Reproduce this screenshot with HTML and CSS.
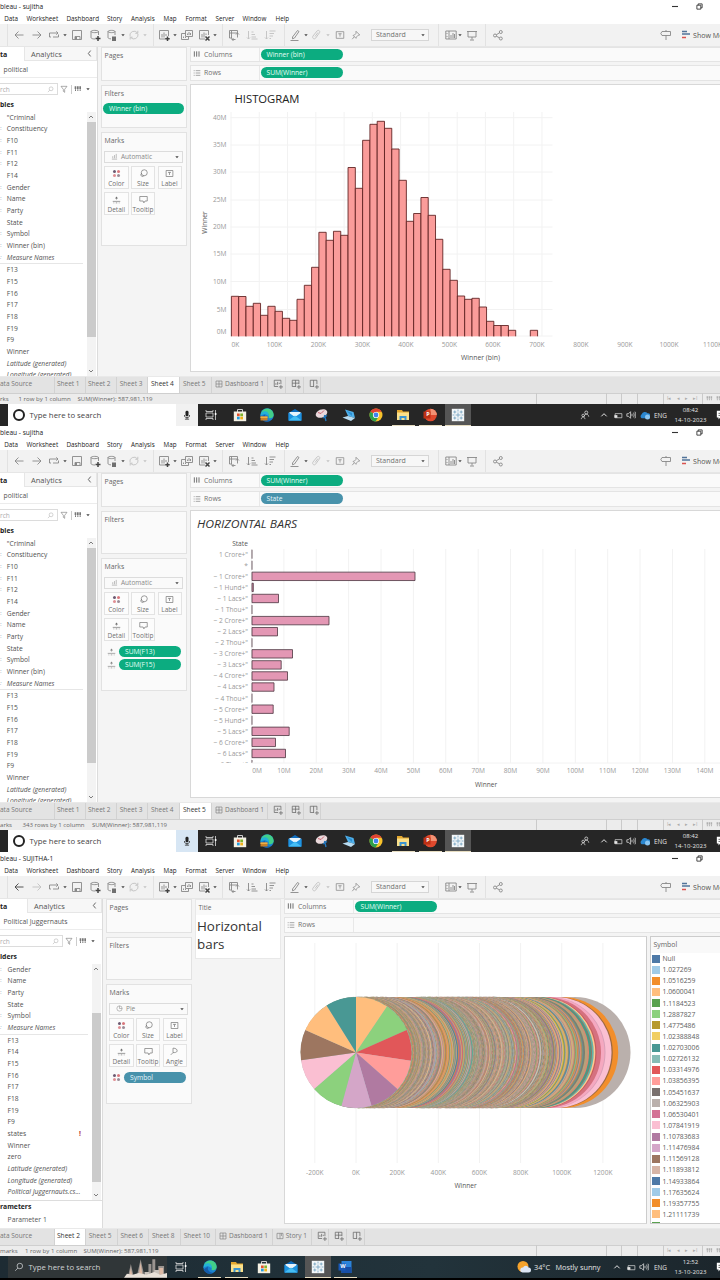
FILE: index.html
```html
<!DOCTYPE html>
<html lang="en">
<head>
<meta charset="utf-8">
<title>Tableau - sujitha</title>
<link rel="stylesheet" href="styles.css">
</head>
<body>
<svg class="sprite" aria-hidden="true">
  <symbol id="back" viewBox="0 0 12 12"><path d="M10.500 6H2M5.500 2.500L2 6l3.500 3.500"/></symbol>
  <symbol id="fwd" viewBox="0 0 12 12"><path d="M1.500 6H10M6.500 2.500L10 6 6.500 9.500"/></symbol>
  <symbol id="redo" viewBox="0 0 12 12"><path d="M3 8H1.500V4H10M8.300 2.300L10 4 8.300 5.700M5 8h5.500V5.500"/></symbol>
  <symbol id="caret" viewBox="0 0 6 6"><path class="fill" d="M1.300 2.200h3.400L3 4.300z"/></symbol>
  <symbol id="save" viewBox="0 0 12 12"><path d="M1.500 1.500h9v9h-9zM4 10.500v-3h5v3"/><path class="fill" d="M4 8h2v2.500H4z"/></symbol>
  <symbol id="dbadd" viewBox="0 0 12 12"><path d="M2 2.500v6c0 1 2 1.500 4 1.500M9.500 6V2.500M2 2.500c0-1.500 7.500-1.500 7.500 0s-7.500 1.500-7.500 0"/><path class="bold" d="M9 7v5M6.500 9.500h5"/></symbol>
  <symbol id="dbpause" viewBox="0 0 12 12"><path d="M2 2.500v6c0 .8 1 1.200 3 1.400M9 6V2.500M2 2.500c0-1.500 7-1.500 7 0s-7 1.500-7 0"/><path class="bold" d="M7 7.500V12M9 7.500V12"/></symbol>
  <symbol id="refresh" viewBox="0 0 12 12"><path d="M2 7.500A4.200 4.200 0 0 1 9.500 4M10 5A4.200 4.200 0 0 1 2.800 8.600M9.800 1.800V4.300H7.300M2.200 10.500V8.200h2.400"/></symbol>
  <symbol id="sheetadd" viewBox="0 0 12 12"><path d="M7 10H1.500V1.500h9V7M4 8.500V5M6 8.500V3.500M8 7V5"/><path class="bold" d="M9.500 7.500v4.500M7.200 9.700h4.500"/></symbol>
  <symbol id="dup" viewBox="0 0 12 12"><path d="M4.500 1.500h7v6h-7zM4.500 4.500h-4v6h7v-3M6.500 6V4.500M8 6V3M9.500 6V4M2.500 9V7.500M4.500 9v-1"/></symbol>
  <symbol id="sheetx" viewBox="0 0 12 12"><path d="M7 10H1.500V1.500h9V6M4 8.500V5M6 8.500V3.500M8 6V4.500"/><path class="bold" d="M7.500 7.500l4 4M11.500 7.500l-4 4"/></symbol>
  <symbol id="swap" viewBox="0 0 12 12"><path d="M1.500 4V1.500h8V4M3.500 1.500v8M1.500 4h8M4 10.500h3.500M9.500 8.500V4M8 5.500L9.500 4 11 5.500M5.500 9L4 10.500 5.500 12M1.500 4v5H4"/></symbol>
  <symbol id="asc" viewBox="0 0 12 12"><path d="M2.500 2v8M1 8.500L2.500 10 4 8.500M5.500 3h2M5.500 5.500H9M5.500 8h4.500M5.500 10h6"/></symbol>
  <symbol id="desc" viewBox="0 0 12 12"><path d="M2.500 2v8M1 8.500L2.500 10 4 8.500M5.500 2h6M5.500 4.500H10M5.500 7H9M5.500 9.500h1.500"/></symbol>
  <symbol id="pen" viewBox="0 0 12 12"><path d="M3.500 8L8.500 1.500l1.500 1L5.500 9l-2 .8zM1.500 11.500h8"/></symbol>
  <symbol id="clip" viewBox="0 0 12 12"><path d="M3 7l4-5c1.500-1.500 3.500 0 2.500 1.700L5.500 9.300C4 10.800 1.800 9 3 7zM5 7.500l3-4"/></symbol>
  <symbol id="tbox" viewBox="0 0 12 12"><path d="M1.500 2h9v8h-9zM4 4.500h4M6 4.500V8"/></symbol>
  <symbol id="pin" viewBox="0 0 12 12"><path d="M6 1.500l4.500 4.500-2 .3L6.500 8.500 6 10 2.500 6.500l1.700-.5L6 4zM4 8l-2.500 3"/></symbol>
  <symbol id="cards" viewBox="0 0 12 12"><path d="M.8 2h10.400v8H.8zM4 2v8M2 4v1M2 7v1M6 9V6M8 9V4M9.500 9V5"/></symbol>
  <symbol id="present" viewBox="0 0 12 12"><path d="M1 2.500h10M2 2.500V8h8V2.500M6 8v2.500M4 11h4"/></symbol>
  <symbol id="share" viewBox="0 0 12 12"><circle cx="3" cy="6.500" r="1.500"/><circle cx="8.800" cy="3" r="1.500"/><circle cx="8.800" cy="9.500" r="1.500"/><path d="M4.300 5.800l3.200-2M4.300 7.200l3.200 1.600"/></symbol>
  <symbol id="sign" viewBox="0 0 12 12"><path d="M2 2.500h8.500v4H2L.8 4.500zM6 6.500V11M6 1v1.500"/></symbol>
  <symbol id="mag" viewBox="0 0 12 12"><circle cx="7" cy="4.800" r="3.300"/><path d="M4.700 7.200L1.500 10.500"/></symbol>
  <symbol id="funnel" viewBox="0 0 12 12"><path d="M1.500 2h9L7 6.500V11L5 9.500v-3z"/></symbol>
  <symbol id="cols" viewBox="0 0 12 12"><path class="wide" d="M2 2v8M5.500 2v8M9 2v8"/></symbol>
  <symbol id="rows" viewBox="0 0 12 12"><path d="M1 2.500h1.500M4 2.500h7M1 6h1.500M4 6h7M1 9.500h1.500M4 9.500h7"/></symbol>
  <symbol id="gridv" viewBox="0 0 12 12"><path class="fill" d="M1 2h2.500v4H1zM4.500 2H7v4H4.500zM8 2h2.500v4H8zM1.500 6.500h1.500V9H1.500zM5 6.500h1.500V9H5zM8.500 6.500H10V9H8.500z"/></symbol>
  <symbol id="dots" viewBox="0 0 12 12"><circle cx="3.300" cy="3.300" r="2" fill="#6d5a72" stroke="none"/><circle cx="8.700" cy="3.300" r="2" fill="#d9777c" stroke="none"/><circle cx="3.300" cy="8.700" r="2" fill="#e08f94" stroke="none"/><circle cx="8.700" cy="8.700" r="2" fill="#9b8c98" stroke="none"/></symbol>
  <symbol id="size" viewBox="0 0 12 12"><circle cx="7" cy="5" r="4"/><path d="M4 5.500a2.300 2.300 0 1 0 2.800 3.200"/></symbol>
  <symbol id="detail" viewBox="0 0 12 12"><path class="fill" d="M6 2l2 2.500H4z"/><path d="M1 8.500h10M2 10.500h1M5 10.500h2M9 10.500h1M6 3v3"/></symbol>
  <symbol id="tip" viewBox="0 0 12 12"><path d="M1 2h10v6H8l-1.500 2.500L5.500 8H1z"/></symbol>
  <symbol id="angle" viewBox="0 0 12 12"><path d="M4 1.500v6l-3 3M4 1.500c4 0 6 2 5.500 4S6 7.500 4 7.500"/></symbol>
  <symbol id="bars" viewBox="0 0 12 12"><path d="M1.500 10.500h9M3 9V5.500M6 9V3.500M9 9V1.500"/></symbol>
  <symbol id="pie" viewBox="0 0 12 12"><circle cx="6" cy="6" r="4.500"/><path d="M6 1.500V6h4.500"/></symbol>
  <symbol id="board" viewBox="0 0 12 12"><path d="M1.500 1.500h9v9h-9zM6 1.500v9M1.500 6h9"/></symbol>
  <symbol id="story" viewBox="0 0 12 12"><path d="M1.500 2H6v8H1.500zM6 2h4.500v8H6M8.200 2v4"/></symbol>
  <symbol id="newws" viewBox="0 0 12 12"><path d="M6 9H1.500V1.500h8V6M3.500 7V5M5.500 7V3.500M7.500 6V4.500M9.500 7v5M7 9.500h5"/></symbol>
  <symbol id="newdb" viewBox="0 0 12 12"><path d="M6 9H1.500V1.500h8V6M5.500 1.500V9M1.500 5h8M9.500 7v5M7 9.500h5"/></symbol>
  <symbol id="newst" viewBox="0 0 12 12"><path d="M6 9H1.500V1.500h8V6M5.500 1.500V9M9.500 7v5M7 9.500h5"/></symbol>
  <symbol id="up" viewBox="0 0 12 12"><path class="wide" d="M2 8l4-4 4 4"/></symbol>
  <symbol id="down" viewBox="0 0 12 12"><path class="wide" d="M2 4l4 4 4-4"/></symbol>
  <symbol id="left" viewBox="0 0 12 12"><path class="wide" d="M8 1L4 6l4 5"/></symbol>

  <symbol id="taskview" viewBox="0 0 14 14"><path d="M2 2v1.500h7V2M2 12v-1.500h7V12M2 5h7v4H2zM11.500 2v10" stroke="#ddd" fill="none" stroke-width=".8"/><path d="M10.800 5h1.600v2h-1.600z" fill="#fff"/></symbol>
  <symbol id="store" viewBox="0 0 14 14"><path d="M4.500 4V1.500h5V4" stroke="#ccc" fill="none"/><path d="M.8 3.500h12.400v9.700H.8z" fill="#f5f1e4"/><path d="M4 5.500h2.700v2.700H4z" fill="#e2512b"/><path d="M7.300 5.500H10v2.700H7.300z" fill="#7fb52c"/><path d="M4 8.700h2.700v2.700H4z" fill="#249ede"/><path d="M7.300 8.700H10v2.700H7.300z" fill="#f1b21b"/></symbol>
  <symbol id="edge" viewBox="0 0 14 14"><circle cx="7" cy="7" r="6.700" fill="#1a80cf"/><path d="M1 5a6.500 6.500 0 0 1 12.700 2c0 2-1.500 3.200-3.500 3.200-1.500 0-2-.8-1.400-1.700C9.500 6 6.500 3.500 1 5z" fill="#42cf89"/><path d="M1 5C5 1.500 9.500 4 8.800 8.500 5 4.800 2.500 6.500.5 8z" fill="#23b1d8"/><path d="M5 6.500c-1 3 1 6 5 6.300-3.500 2-8 .5-9.300-3.200z" fill="#145aa8"/></symbol>
  <symbol id="case" viewBox="0 0 8 6"><path d="M.5 1.500h7v4h-7z" fill="#c98028"/><path d="M.5 1.500h7V3h-7z" fill="#efaf45"/></symbol>
  <symbol id="mail" viewBox="0 0 14 14"><path d="M.5 5L7 1l6.500 4v7.500H.5z" fill="#0f6cbd"/><path d="M1.500 4h11v4h-11z" fill="#e8f4fc"/><path d="M.5 4.500L7 9l6.500-4.500v8H.5z" fill="#1f93e0"/><path d="M.5 12.500L7 7.500l6.500 5z" fill="#45bdf3"/></symbol>
  <symbol id="snip" viewBox="0 0 14 14"><ellipse cx="6.500" cy="5.500" rx="6" ry="4" fill="#ead9dc" transform="rotate(-22 6.500 5.500)"/><path d="M3 4.500l3 1 3-3" stroke="#c35361" stroke-width=".9" fill="none"/><path d="M9.500 7l1.500 6M12 7.500L8 10" stroke="#2176bd" stroke-width="1.400"/></symbol>
  <symbol id="pc" viewBox="0 0 14 14"><path d="M3 1.500L11.500 4l1.500 6-7-2z" fill="#4fb0ea"/><path d="M.5 9.500L6 8l7 2-4 3z" fill="#b8dcf2"/><path d="M4.500 3l5.500 2v3z" fill="#2b8ed2"/></symbol>
  <symbol id="chrome" viewBox="0 0 14 14"><circle cx="7" cy="7" r="6.500" fill="#f8c22b"/><path d="M7 7L1.400 3.700A6.500 6.500 0 0 1 12.600 3.700H7z" fill="#e04234"/><path d="M7 7l-5.600-3.300A6.500 6.500 0 0 0 6.500 13.500L9.500 9z" fill="#2da14c"/><circle cx="7" cy="7" r="3.100" fill="#fff"/><circle cx="7" cy="7" r="2.400" fill="#3f83ee"/></symbol>
  <symbol id="folder" viewBox="0 0 14 14"><path d="M1 2h5l1 1.500h6V12H1z" fill="#e3a72f"/><path d="M1 4.500h12V12H1z" fill="#fbe08a"/><path d="M3.500 8h7v4h-2v-2h-3v2h-2z" fill="#3c94d0"/></symbol>
  <symbol id="ppt" viewBox="0 0 14 14"><circle cx="7.500" cy="7" r="6.300" fill="#e0492d"/><path d="M7.500.7a6.300 6.300 0 0 1 6.300 6.300H7.500z" fill="#f39274"/><path d="M.5 3.500h7v7h-7z" fill="#bd3015"/></symbol>
  <symbol id="word" viewBox="0 0 14 14"><path d="M3.500 1h10v12h-10z" fill="#2b83da"/><path d="M3.500 7h10v6h-10z" fill="#174ea5"/><path d="M.5 3.500h7v7h-7z" fill="#1858b8"/></symbol>
  <symbol id="tableau" viewBox="0 0 14 14"><path d="M.8.8h12.400v12.400H.8z" fill="#f4f7f9"/><path d="M7 4.500v5M4.500 7h5M7 1.500v2M7 10.500v2M1.500 7h2M10.500 7h2M3.800 2.500v3M2.300 4h3M10.200 2.500v3M8.700 4h3M3.800 8.500v3M2.300 10h3M10.200 8.500v3M8.700 10h3" stroke="#6f9fbe" fill="none" stroke-width=".8"/></symbol>
  <symbol id="mic" viewBox="0 0 12 12"><rect x="4.200" y="1" width="3.600" height="6.500" rx="1.600" fill="#222" stroke="none"/><path d="M3 6v1.500c0 2 6 2 6 0V6M6 9v2M3.500 11h5" stroke="#222"/></symbol>
  <symbol id="people" viewBox="0 0 12 12"><circle cx="7.500" cy="3" r="1.800"/><path d="M5 8c.5-4 5-4 5.500 0M1.500 11c.5-3.500 4-3.500 4.500 0"/><circle cx="3.800" cy="6.500" r="1.500"/></symbol>
  <symbol id="battery" viewBox="0 0 12 12"><path d="M1.500 3.500h9v5.500h-9z"/><path class="fill" d="M.5 5.500h4V9h-4z"/></symbol>
  <symbol id="vol" viewBox="0 0 12 12"><path d="M1 4.500h2L5.500 2v8L3 7.500H1zM7.200 4.500v3M9 3.200c1 2 1 3.600 0 5.600M10.700 2c1.500 3 1.500 5 0 8"/></symbol>
  <symbol id="cloud" viewBox="0 0 12 12"><path d="M2 10a3 3 0 0 1 0-5 4 4 0 0 1 7-1 3 3 0 0 1 1 6z" fill="#2b87d0" stroke="none"/><circle cx="9" cy="8.500" r="3" fill="#8ac5f0" stroke="none"/></symbol>
  <symbol id="note" viewBox="0 0 12 12"><path d="M1 1h11v8H5l-2 2.500V9H1z" fill="#fff" stroke="none"/><path d="M3 4h8M3 6.500h8" stroke="#333"/></symbol>
  <symbol id="city" viewBox="0 0 44 20"><path d="M4 19l3-13 3 13zM13 19l4-18 4 18zM25 19V6h3v13zM29 19V1h3v18zM35 19V8h6v11z" fill="#9a9490"/><path d="M15 18l2-14 2 14zM5.500 18l1.500-8 1.500 8zM36 10h4v7h-4z" fill="#dcb9a5"/><path d="M21 14h5v5h-5zM31 12h5v7h-5z" fill="#c9c2bc"/><path d="M0 20l3-4 6 1 6-2 8 2 8-3 6 3 7-2v5z" fill="#e9e1d9"/></symbol>
  <symbol id="weather" viewBox="0 0 14 14"><circle cx="6" cy="6.500" r="5.500" fill="#f6a32c"/><path d="M5.500 12.500a2.500 2.500 0 0 1 .5-5 3 3 0 0 1 5.500 0 2.500 2.500 0 0 1 0 5z" fill="#dce6f5"/></symbol>
</svg>
<div id="desktop" class="desktop"></div>
<script src="app.js"></script>
</body>
</html>
```
FILE: styles.css
```css
* { box-sizing: border-box; }
body { margin: 0; background: #000; font-family: "Open Sans", "Noto Sans", sans-serif; color: #555; overflow: hidden; }
.sprite { position: absolute; width: 0; height: 0; }
.desktop { width: 720px; height: 1280px; overflow: hidden; }
.win { height: 426px; background: #f4f4f4; display: flex; flex-direction: column; overflow: hidden; white-space: nowrap; }
.win > * { flex: none; }
.ico { width: 12px; height: 12px; fill: none; stroke: currentColor; stroke-width: .900; display: block; flex: none; }
.ico .fill, .fill { fill: currentColor; stroke: none; }
.bold { stroke-width: 1.5; stroke: #444; }
.wide { stroke-width: 1.5; }
.s6 { width: 6px; height: 6px; }
.s7 { width: 7px; height: 7px; }
.s8 { width: 8px; height: 8px; }
.s9 { width: 9px; height: 9px; }
.s10 { width: 10px; height: 10px; }
.s14 { width: 14px; height: 14px; }
.track { display: flex; align-items: center; height: 100%; }
.slot { flex: none; min-width: 0; display: flex; align-items: center; height: 100%; }

.titlebar { height: 13px; background: #fff; font-size: 6.600px; color: #222; }
.menubar { height: 11px; background: #fff; font-size: 6.300px; color: #222; padding-top: .500px; }
.toolbar { height: 22.500px; background: #f2f2f2; border-bottom: 1px solid #e6e6e6; color: #888; }
.toolbar .ico { margin-left: -.500px; }
.off { opacity: .45; }
.strong { color: #444; }
.sep { width: 1px; height: 100%; background: #e2e2e2; }
.select { width: 58px; height: 12px; border: 1px solid #d6d6d6; background: #f7f7f7; display: flex; align-items: center; justify-content: space-between; padding: 0 2px 0 4px; font-size: 7px; color: #707070; }
.showme { font-size: 7.100px; color: #555; }
.smico { width: 8px; height: 9px; }

.body { height: 329px; display: flex; }
.pane { width: 97.500px; background: #fff; border-right: 1px solid #dcdcdc; display: flex; flex-direction: column; height: 329px; overflow: hidden; }
.third .pane { width: 102.500px; }
.ptabs { height: 14.500px; display: flex; flex: none; font-size: 7.500px; padding-top: .500px; }
.ptab { width: 24px; font-weight: 700; font-size: 7px; color: #222; display: flex; align-items: center; }
.third .ptab { width: 27px; }
.ptab2 { flex: 1; background: #f7f7f7; border: 1px solid #e6e6e6; border-top: 0; display: flex; align-items: center; justify-content: space-between; padding: 0 3px 0 6px; }
.ds { height: 16.500px; flex: none; border-bottom: 1px solid #ececec; font-size: 6.800px; padding: 1px 0 0 3.500px; display: flex; align-items: center; }
.search { height: 23px; flex: none; display: flex; align-items: center; gap: 2.500px; color: #777; }
.sbox { width: 57.500px; height: 12px; border: 1px solid #dcdcdc; border-left: 0; display: flex; align-items: center; justify-content: space-between; padding-right: 3px; font-size: 6.600px; color: #adadad; }
.third .sbox { width: 62.500px; }
.vr { width: 1px; height: 9px; background: #ccc; }
.head { height: 8px; line-height: 8px; flex: none; font-weight: 700; font-size: 6.800px; color: #222; }
.listbox { flex: 1; min-height: 0; display: flex; padding-top: 3px; }
.list { flex: 1; overflow: hidden; }
.field { height: 11.680px; line-height: 11.680px; font-size: 6.700px; display: flex; color: #505050; }
.field .mk { width: 6.800px; flex: none; color: #7a9bb5; font-size: 6px; }
.third .field .mk { width: 7.600px; }
.field .warn { margin-left: auto; padding-right: 11px; color: #b03030; font-weight: 700; }
.it { font-style: italic; }
.rule { height: 1px; background: #e6e6e6; margin-right: 4px; }
.scroll { width: 8.500px; margin-right: 1px; background: #f3f3f3; display: flex; flex-direction: column; align-items: center; color: #555; padding: 2px 0; }
.thumb { width: 8.500px; background: #cbcbcb; margin-top: 2px; height: 215px; }
.third .thumb { margin-top: 41px; height: 169px; }
.scroll .ico:last-child { margin-top: auto; }
.params { flex: none; height: 28px; border-top: 1px solid #ddd; padding-top: 1.500px; }
.params .head { height: 10px; line-height: 10px; }
.params .p { padding-left: 7.600px; font-size: 6.800px; line-height: 15px; }

.cards { width: 86px; margin-left: 3px; display: flex; flex-direction: column; gap: 4px; }
.card { background: #fafafa; border: 1px solid #e2e2e2; padding: 2px 2.500px; font-size: 6.900px; color: #666; flex: none; }
.card .t { line-height: 11px; padding-left: .500px; display: block; }
.c-pages { height: 34px; }
.c-filters { height: 43px; }
.c-marks { height: 114px; }
.second .c-marks { height: 133px; }
.third .c-marks { height: 120.500px; }
.pill { height: 11px; border-radius: 6px; background: #0cac80; color: #e4fff6; font-size: 6.700px; line-height: 11px; padding-left: 6px; }
.pill.blue { background: #4892ab; color: #e5f6fb; }
.c-filters .pill { margin: 4px -1px 0 -1px; }
.mark-type { height: 11.500px; border: 1px solid #dcdcdc; margin: 5.500px .500px 3px 0; display: flex; align-items: center; gap: 3px; padding-left: 6px; font-size: 6.500px; color: #888; }
.mark-type .ico:last-child { margin: 0 2px 0 auto; color: #444; }
.btns { display: grid; grid-template-columns: 24.500px 24px 24px; column-gap: 2.500px; row-gap: 3px; }
.btn { height: 23px; border: 1px solid #e3e3e3; background: #fcfcfc; display: flex; flex-direction: column; align-items: center; font-size: 6.500px; line-height: 9px; padding-top: 2.500px; gap: 1px; color: #707070; }
.enc { display: flex; align-items: center; gap: 3px; padding: 0 2px 0 3px; margin-top: 1.800px; height: 11px; color: #888; }
.encs { padding-top: 4px; }
.enc .pill { flex: 1; }

.title-card { width: 86px; height: 60px; margin-left: 3px; background: #fff; border: 1px solid #e8e8e8; }
.title-card .t { display: block; height: 15px; line-height: 16px; background: #f9f9f9; font-size: 6.500px; padding-left: 3px; color: #666; }
.title-card p { margin: 2px 0 0 1.500px; font-size: 13.400px; line-height: 18.300px; color: #333; }

.main { flex: 1; min-width: 0; margin-left: 3px; display: flex; flex-direction: column; }
.shelf { height: 15.500px; background: #fafafa; border: 1px solid #e4e4e4; border-right: 0; display: flex; align-items: center; margin-bottom: 3px; font-size: 6.900px; color: #707070; flex: none; }
.shelf .n { width: 69px; height: 100%; border-right: 1px solid #e8e8e8; display: flex; align-items: center; gap: 3.500px; padding-left: 2px; }
.shelf .pill { width: 82px; margin-left: 1px; }
.view { flex: 1; display: flex; gap: 3px; margin-bottom: 4px; min-height: 0; }
.canvas { flex: 1; min-width: 0; background: #fff; border: 1px solid #d8d8d8; border-right: 0; overflow: hidden; }
.third .canvas { flex: 0 0 363px; border-right: 1px solid #ccc; }
.chart { display: block; width: 100%; height: 100%; font-size: 6.600px; fill: #999; }
.chart .grid { stroke: #f2f2f2; stroke-width: 1; fill: none; }
.chart .axt { fill: #555; }
.chart .ttl { font-size: 10.300px; fill: #222; font-weight: 500; }
.chart .ital { font-style: italic; fill: #333; }
.hbar { fill: #fa9c9a; stroke: #5a1c1c; stroke-width: .850; }
.rbar { fill: #e397b4; stroke: #4b3540; stroke-width: .800; }
.legend { flex: 1; background: #fff; border: 1px solid #ccc; border-right: 0; overflow: hidden; }
.legend .t { display: block; height: 16.500px; line-height: 16px; background: #f9f9f9; padding-left: 3px; font-size: 6.900px; color: #666; }
.leg { height: 11.130px; display: flex; align-items: center; gap: 3px; padding-left: 1px; font-size: 6.800px; color: #606060; }
.sw { width: 8px; height: 8px; }

.tabs { height: 17px; background: #e3e3e3; font-size: 6.500px; color: #777; border-top: 1px solid #e9e9e9; }
.tab { width: 100%; height: 100%; border-left: 1px solid #d2d2d2; padding: 0 0 2px 2.500px; display: flex; align-items: center; gap: 2px; }
.tab.plain { border-left: 0; padding-left: 0; }
.tab.i { padding-left: 5px; color: #666; }
.tab.on { background: #fff; color: #333; font-weight: 500; font-size: 6.600px; }
.status { height: 11.500px; background: #ececec; border-top: 1px solid #cfcfcf; font-size: 6.100px; color: #666; }
.status .slot { padding-bottom: 1px; }
.status .sep { background: #cacaca; height: 11.500px; }
.status .nav { color: #aaa; font-size: 5px; }

.task { height: 22px; background: #262626; color: #e4e4e4; }
.third .task { background: linear-gradient(90deg, #1d2b33, #22333b 60%, #1c262c); }
.find { height: 22px; background: #fff; color: #444; font-size: 7.800px; display: flex; align-items: center; width: 190.500px; padding: 0 0 0 5px; }
.find .lbl { margin: -1px 0 0 5px; flex: 1; }
.ring { width: 12px; height: 12px; border: 2px solid #222; border-radius: 50%; }
.mic { width: 22px; height: 22px; background: #f1f1f1; display: flex; align-items: center; justify-content: center; }
.second .mic { background: #d7e6f4; }
.third .find { background: #303638; color: #d0d3d5; width: 159.500px; padding-left: 6px; }
.city { width: 43px; height: 20px; align-self: flex-end; }
.app { width: 26px; height: 22px; display: flex; align-items: center; justify-content: center; border-bottom: 1px solid transparent; position: relative; }
.app.run { border-bottom-color: #e6dcc0; width: 23px; }
.app.act { background: #555; border-bottom-color: #e6dcc0; }
.badge { position: absolute; left: 6px; bottom: 4px; width: 8px; height: 6px; }
.letter { position: absolute; left: 6px; top: 7px; width: 7px; text-align: center; font-size: 5.500px; line-height: 7px; font-weight: 700; color: #fff; }
.clock { font-size: 6.100px; line-height: 10px; text-align: center; width: 34px; }
.lang { font-size: 6.400px; }
.wx { font-size: 7.300px; }
```
FILE: app.js
```js
const ico = (id, cls = '') => `<svg class="ico ${cls}"><use href="#${id}"/></svg>`;

// A row of items, each one given by its start; a slot is as wide as the distance to the next start.
function track(items) {
  let out = items[0][0] ? `<div class="slot" style="width:${items[0][0]}px"></div>` : '';
  items.forEach(([x, html], i) => {
    const next = i + 1 < items.length ? items[i + 1][0] : 720;
    out += `<div class="slot" style="width:${(next - x).toFixed(2)}px">${html}</div>`;
  });
  return `<div class="track">${out}</div>`;
}

const sep = '<span class="sep"></span>';
const caret = ico('caret', 's6 strong');
const caretOff = ico('caret', 's6 off');

function toolbar(w) {
  const sort = w.sortOff ? 'off' : '';
  return track([
    [7, sep], [13.5, ico('back', w.back ? 'strong' : '')], [31.5, ico('fwd', w.back ? 'off' : '')], [48, ico('redo')], [62.5, caret],
    [71.5, ico('save')], [89.5, ico('dbadd')], [106, ico('dbpause')], [120, caret], [128.5, ico('refresh', 'off')], [142.5, caretOff],
    [152.5, sep], [158, ico('sheetadd')], [172.5, caret], [181, ico('dup')], [198, ico('sheetx')], [212, caret],
    [222, sep], [228.5, ico('swap')], [246.5, ico('asc', sort)], [264.5, ico('desc', sort)],
    [283.5, sep], [289.5, ico('pen')], [303, caret], [310.5, ico('clip', 'off')], [325, caretOff], [335.5, ico('tbox', 's10')], [351.5, ico('pin', 's10')],
    [371, `<div class="select"><span>Standard</span>${caret}</div>`], [437.5, sep], [445, ico('cards')], [457, caret], [466.5, ico('present')],
    [485, sep], [492, ico('share')], [660, ico('sign')],
    [682, '<svg class="smico" viewBox="0 0 8 9"><path d="M0 1.500h5M0 4h8" stroke="#52749a" stroke-width="1.600"/><path d="M0 7.500h4" stroke="#d9534f" stroke-width="1.500"/></svg>'],
    [693, '<span class="showme">Show Me</span>']
  ]);
}

const menu = track([[4.2, 'Data'], [26.5, 'Worksheet'], [66.5, 'Dashboard'], [107, 'Story'], [131, 'Analysis'], [163.5, 'Map'],
  [185.5, 'Format'], [215.5, 'Server'], [242.5, 'Window'], [275.5, 'Help']]);

const field = f => {
  if (f === '-') return '<div class="rule"></div>';
  const it = f[0] === '/', mk = f[it ? 1 : 0] === ':';
  const name = f.replace(/^\/?:?/, '');
  return `<div class="field ${it ? 'it' : ''}"><span class="mk">${mk ? ':' : ''}</span>${name}${name === 'states' ? '<span class="warn">!</span>' : ''}</div>`;
};

function pane(w) {
  return `<div class="pane">
    <div class="ptabs"><span class="ptab">ta</span><span class="ptab2">Analytics ${ico('left', 's7')}</span></div>
    <div class="ds">${w.source}</div>
    <div class="search"><span class="sbox">rch ${ico('mag', 's7')}</span>${ico('funnel', 's8')}<span class="vr"></span>${ico('gridv', 's8')}${caret}</div>
    <div class="head">${w.head}</div>
    <div class="listbox"><div class="list">${w.fields.map(field).join('')}</div>
      <div class="scroll">${ico('up', 's6')}<span class="thumb"></span>${ico('down', 's6')}</div></div>
    ${w.params ? '<div class="params"><div class="head">rameters</div><div class="p">Parameter 1</div></div>' : ''}
  </div>`;
}

const pill = ([text, blue]) => `<div class="pill ${blue ? 'blue' : ''}">${text}</div>`;
const btn = (id, t) => `<span class="btn">${ico(id, 's9')}${t}</span>`;

function cards(w) {
  return `<div class="cards">
    <div class="card c-pages"><span class="t">Pages</span></div>
    <div class="card c-filters"><span class="t">Filters</span>${w.filter ? pill([w.filter]) : ''}</div>
    <div class="card c-marks"><span class="t">Marks</span>
      <div class="mark-type">${w.mark === 'Pie' ? ico('pie', 's7') : ico('bars', 's7')}${w.mark}${ico('caret', 's6')}</div>
      <div class="btns">${btn('dots', 'Color')}${btn('size', 'Size')}${btn('tbox', 'Label')}${btn('detail', 'Detail')}${btn('tip', 'Tooltip')}${w.mark === 'Pie' ? btn('angle', 'Angle') : ''}</div>
      <div class="encs">${w.encs.map(([i, ...p]) => `<div class="enc">${ico(i, 's9')}${pill(p)}</div>`).join('')}</div>
    </div></div>`;
}

const text = (x, y, s, extra = '') => `<text x="${x}" y="${y + 2.4}" text-anchor="middle" ${extra}>${s}</text>`;
const fit = (s, k) => `textLength="${(s.length * k).toFixed(1)}" lengthAdjust="spacingAndGlyphs"`;

function histogram() {
  const tops = [296.3, 296.5, 306.3, 303.3, 315.3, 306.3, 311.3, 318.3, 320.3, 299.3, 285.3, 267.3, 232.3, 240.3, 231.3, 235.3, 167.5, 188.3,
    140.3, 124.3, 121.3, 128.3, 149, 180.3, 221.3, 213.5, 197.5, 215.3, 239.3, 269.3, 280.3, 296, 299.3, 298.3, 307, 321.3, 325.5, 325.5, 330.3, 0, 0, 330.3];
  let s = '';
  [117.7, 145, 172, 200, 227, 254, 281.5, 309.5, 336].forEach((y, i) => {
    s += `<path class="grid" d="M230 ${y}H552"/>`;
    s += `<text x="226" y="${(i === 8 ? 331.5 : y) + 2.4}" text-anchor="end">${40 - i * 5}M</text>`;
  });
  for (let i = 0; i < 12; i++) s += `<path class="grid" d="M${230.5 + i * 28.27} 112V336"/>`;
  tops.forEach((t, i) => { if (t) s += `<path class="hbar" d="M${230.9 + i * 7.29} 336.300V${t}h7.290V336.300"/>`; });
  [235, 274, 318, 362, 405.5, 449, 492.5, 536.5, 580.5, 624.5, 668.5, 712].forEach((x, i) => { s += text(x, 345, i ? `${i}00K` : '0K'); });
  s += text(480, 358, 'Winner (bin)', 'class="axt" ' + fit('Winner (bin)', 3.25));
  s += `<text class="axt" transform="translate(206.500 222.500) rotate(-90)" text-anchor="middle">Winner</text>`;
  s += `<text class="ttl" x="234" y="102.600" textLength="65" lengthAdjust="spacingAndGlyphs">HISTOGRAM</text>`;
  return `<svg class="chart" viewBox="190.500 85 529.500 286" preserveAspectRatio="none">${s}</svg>`;
}

function horizontalBars() {
  const rows = [['1 Crore+"', 0], ['*', 0], ['~ 1 Crore+"', 414.5], ['~ 1 Hund+"', 252.8], ['~ 1 Lacs+"', 278], ['~ 1 Thou+"', 0], ['~ 2 Crore+"', 328.5],
    ['~ 2 Lacs+"', 277], ['~ 2 Thou+"', 0], ['~ 3 Crore+"', 292], ['~ 3 Lacs+"', 280.7], ['~ 4 Crore+"', 287], ['~ 4 Lacs+"', 273.5], ['~ 4 Thou+"', 0],
    ['~ 5 Crore+"', 272.7], ['~ 5 Hund+"', 0], ['~ 5 Lacs+"', 288.7], ['~ 6 Crore+"', 275], ['~ 6 Lacs+"', 285], ['~ 6 Thou+"', 0]];
  let s = '';
  for (let i = 0; i < 15; i++) {
    const x = 251 + i * 32.38;
    s += `<path class="grid" d="M${x} 549V763"/>` + text(i ? x : 256.5, 771, `${i * 10}M`);
  }
  s += '<clipPath id="rowsclip"><path d="M190 540h530v223H190z"/></clipPath><g clip-path="url(#rowsclip)">';
  rows.forEach(([t, end], i) => {
    const y = 554.2 + i * 11.07;
    s += `<text x="247.500" y="${y + 2.4}" text-anchor="end" font-size="6.600">${t}</text>`;
    s += end ? `<path class="rbar" d="M251.500 ${y - 4.2}H${end}v8.400H251.500z"/>` : `<path class="rbar" d="M251.500 ${y - 4.5}v9"/>`;
  });
  s += '</g><path class="grid" d="M251 763H720"/>';
  s += text(239.5, 543.6, 'State', 'class="axt"') + text(485.5, 784.5, 'Winner', 'class="axt"');
  s += `<text class="ttl ital" x="196.500" y="528.300" textLength="100" lengthAdjust="spacingAndGlyphs">HORIZONTAL BARS</text>`;
  return `<svg class="chart" viewBox="190.500 511 529.500 286" preserveAspectRatio="none">${s}</svg>`;
}

const palette = ['#4e79a7', '#a0cbe8', '#f28e2b', '#ffbe7d', '#59a14f', '#8cd17d', '#b6992d', '#f1ce63', '#499894', '#86bcb6',
  '#e15759', '#ff9d9a', '#79706e', '#bab0ac', '#d37295', '#fabfd2', '#b07aa1', '#d4a6c8', '#9d7660', '#d7b5a6'];

function pies() {
  const cy = 1052.5, r = 55.5;
  let s = '', seed = 11;
  const rnd = () => (seed = (seed * 16807) % 2147483647) / 2147483647;
  for (let i = 0; i < 8; i++) {
    const x = 355.5 + (i - 1) * 41.15;
    s += `<path class="grid" d="M${x} 943V1163"/>` + text(x, 1172.5, i === 1 ? '0K' : `${(i - 1) * 200}K`);
  }
  const circle = (edge, c) => `<circle cx="${(edge - r).toFixed(2)}" cy="${cy}" r="${r}" fill="${c}"/>`;
  [[630, '#bab0ac'], [617.7, '#f28e2b'], [612.3, '#9d6a40'], [611, '#fabfd2'], [605, '#d9a0b8'], [604, '#f5a8c0'], [600.5, '#d5717f'], [596, '#c45c5c'],
    [594.8, '#ffc890'], [593.2, '#64b5a9'], [591.5, '#8c7a68'], [590.5, '#499884'], [588.5, '#d98a70'], [587, '#b9a07a'], [584.5, '#79806e']].forEach(a => { s += circle(...a); });

  // Densely stacked marks average towards a neutral tone; the accents are the wider bands that stay visible.
  const mix = (hex, k) => {
    const base = [163, 148, 122];
    return 'rgb(' + base.map((b, i) => Math.round(b + (parseInt(hex.substr(1 + i * 2, 2), 16) - b) * k)).join(',') + ')';
  };
  const accents = [[581, '#e08a5a'], [577.5, '#d98a3c'], [573.5, '#caa98c'], [569.5, '#5f86a8'], [567, '#d8c04c'], [563.5, '#d9bd50'], [558, '#e0a878'], [540.5, '#c9c3c0'],
    [531, '#e0ad84'], [517, '#c76f80'], [502, '#dcb19a'], [490, '#ddb38a'], [472.5, '#5aab94'], [462.5, '#cf6878'], [460, '#a8709a'], [457.5, '#54809f'], [452, '#dd9c40'],
    [448.5, '#d9a24c'], [445, '#d39a50'], [436, '#a2a4bc'], [431, '#e2b68c']];
  for (let edge = 583; edge > 411; edge -= 0.62) {
    while (accents.length && accents[0][0] >= edge) {
      const [x, c] = accents.shift();
      s += circle(x, c);
      edge = Math.min(edge, x - 1.1);
    }
    const strong = edge > 552 || (edge > 440 && edge < 472);
    s += circle(edge, mix(palette[Math.floor(rnd() * 20)], strong ? 0.6 : rnd() < 0.13 ? 0.62 : 0.33));
    if (!strong) s += `<circle cx="${(edge - r).toFixed(2)}" cy="${cy}" r="${r - 0.3}" fill="none" stroke="${mix(palette[Math.floor(rnd() * 20)], .55)}" stroke-width=".500" stroke-dasharray="${(1 + rnd() * 3).toFixed(1)} ${(2 + rnd() * 4).toFixed(1)}"/>`;
  }
  const ends = [0, 34, 66, 98.5, 131.5, 163.8, 195.3, 229, 262, 294, 328, 360];
  const fills = ['#ffbe7d', '#8cd17d', '#e15759', '#ff9d9a', '#b07aa1', '#d4a6c8', '#8cd17d', '#fabfd2', '#9d7660', '#ffbe7d', '#499894'];
  const pt = a => `${(355.5 + r * Math.sin(a * Math.PI / 180)).toFixed(2)} ${(cy - r * Math.cos(a * Math.PI / 180)).toFixed(2)}`;
  fills.forEach((c, i) => { s += `<path fill="${c}" d="M355.500 ${cy}L${pt(ends[i])}A${r} ${r} 0 0 1 ${pt(ends[i + 1])}z"/>`; });
  s += text(465, 1186, 'Winner', 'class="axt"');
  return `<svg class="chart" viewBox="284.500 937 361 286" preserveAspectRatio="none">${s}</svg>`;
}

const legendItems = ['Null', '1.027269', '1.0516259', '1.0600041', '1.1184523', '1.2887827', '1.4775486', '1.02388848', '1.02703006', '1.02726132',
  '1.03314976', '1.03856395', '1.05451637', '1.06325903', '1.06530401', '1.07841919', '1.10783683', '1.11476984', '1.11569128', '1.11893812',
  '1.14933864', '1.17635624', '1.19357755', '1.21111739', '1.22300500'];
const legend = () => `<div class="legend"><span class="t">Symbol</span>${legendItems.map((t, i) =>
  `<div class="leg"><span class="sw" style="background:${i === 24 ? '#59a14f' : palette[i < 20 ? i : i - 20]}"></span>${t}</div>`).join('')}</div>`;

const shelf = (icon, name, p) => `<div class="shelf"><span class="n">${ico(icon, 's8')}${name}</span>${p ? pill(p) : ''}</div>`;

function tabs(w) {
  return track(w.tabs.map(([x, label, icon]) => [x,
    `<div class="tab ${x === 0 ? 'plain' : ''} ${label === w.active ? 'on' : ''} ${label === '' ? 'i' : ''}">${icon ? ico(icon, label ? 's8' : 's10') : ''}${label}</div>`]));
}

function status(w) {
  const st = w.status;
  return track([[0, st[0]], [st[1], st[2]], [st[3], 'SUM(Winner): 587,981,119'], [535.5, sep], [606, sep], [621, sep], [636.5, sep], [662.5, sep],
    [667, '<span class="nav">I◂</span>'], [677, '<span class="nav">◂</span>'], [685, '<span class="nav">▸</span>'], [693, '<span class="nav">▸I</span>'],
    [701.5, sep], [705.5, ico('gridv', 's7 off')], [716, ico('gridv', 's7 off')]]);
}

const app = (id, cls = '', extra = '') => `<div class="app ${cls}"><svg class="s14"><use href="#${id}"/></svg>${extra}</div>`;
const letter = c => `<span class="letter">${c}</span>`;
const clock = (a, b) => `<div class="clock">${a}<br>${b}</div>`;
const taskA = () => track([
  [7.5, `<div class="find"><span class="ring"></span><span class="lbl">Type here to search</span><span class="mic">${ico('mic', 's10')}</span></div>`],
  [198, app('taskview')], [226.5, app('store')], [254, app('edge', '', '<svg class="badge"><use href="#case"/></svg>')],
  [281.5, app('mail')], [309, app('snip')], [336, app('pc')], [363, app('chrome')], [391.5, app('folder', 'run')], [418.5, app('ppt', 'run', letter('P'))], [444.5, app('tableau', 'act')],
  [579.5, ico('people', 's10')], [600, ico('up', 's8')], [613.5, ico('battery', 's9')], [626, ico('vol', 's10')], [639.5, ico('cloud', 's10')],
  [654, '<span class="lang">ENG</span>'], [673.5, clock('08:42', '14-10-2023')], [716, ico('note', 's10')]]);
const taskB = () => track([
  [7.5, `<div class="find">${ico('mag', 's10')}<span class="lbl">Type here to search</span><svg class="city"><use href="#city"/></svg></div>`],
  [168, app('taskview')], [198, app('edge', 'run')], [225, app('folder', 'run')], [250.5, app('store')], [277.5, app('mail')], [304.5, app('tableau', 'act')],
  [333.5, app('word', 'run', letter('W'))],
  [517, '<svg class="s14"><use href="#weather"/></svg>'], [534, '<span class="wx">34°C</span>'], [555.5, '<span class="wx">Mostly sunny</span>'],
  [613, ico('up', 's8')], [626.5, ico('battery', 's9')], [638.5, ico('vol', 's10')], [654, '<span class="lang">ENG</span>'], [673.5, clock('12:52', '13-10-2023')], [716, ico('note', 's10')]]);

const fieldsA = ['"Criminal', ':Constituency', ':F10', ':F11', ':F12', 'F14', ':Gender', ':Name', ':Party', 'State', ':Symbol', ':Winner (bin)', '/:Measure Names', '-',
  'F13', 'F15', 'F16', 'F17', 'F18', 'F19', 'F9', 'Winner', '/Latitude (generated)', '/Longitude (generated)'];
const tabsA = [[0, 'ata Source'], [53.5, 'Sheet 1'], [84.5, 'Sheet 2'], [116.3, 'Sheet 3'], [147.5, 'Sheet 4'], [179.5, 'Sheet 5'], [211.5, 'Dashboard 1', 'board'],
  [267, '', 'newws'], [285, '', 'newdb'], [303, '', 'newst'], [320.5, ' ']];

const windows = [
  { cls: 'first', title: 'bleau - sujitha', source: 'political', head: 'bles', fields: fieldsA, filter: 'Winner (bin)', mark: 'Automatic', encs: [], sortOff: true,
    cols: ['Winner (bin)'], rows: ['SUM(Winner)'], chart: histogram, tabs: tabsA, active: 'Sheet 4', status: ['rks', 18.5, '1 row by 1 column', 77.5], task: taskA },
  { cls: 'second', title: 'bleau - sujitha', source: 'political', head: 'bles', fields: fieldsA, mark: 'Automatic',
    encs: [['detail', 'SUM(F13)'], ['detail', 'SUM(F15)']],
    cols: ['SUM(Winner)'], rows: ['State', true], chart: horizontalBars, tabs: tabsA, active: 'Sheet 5', status: ['arks', 22.5, '343 rows by 1 column', 92], task: taskA },
  { cls: 'third', title: 'bleau - SUJITHA-1', source: 'Political Juggernauts', head: 'lders', back: true, params: true,
    fields: [':Gender', ':Name', ':Party', 'State', ':Symbol', '/:Measure Names', '-', 'F13', 'F14', 'F15', 'F16', 'F17', 'F18', 'F19', 'F9', 'states', 'Winner', 'zero',
      '/Latitude (generated)', '/Longitude (generated)', '/Political Juggernauts.cs...'],
    mark: 'Pie', encs: [['dots', 'Symbol', true]], cols: ['SUM(Winner)'], chart: pies, legend: true, card: 'Horizontal<br>bars',
    tabs: [[0, 'ata Source'], [53.5, 'Sheet 2'], [85.3, 'Sheet 5'], [117, 'Sheet 6'], [148.5, 'Sheet 8'], [180.3, 'Sheet 10'], [215.5, 'Dashboard 1', 'board'], [272.3, 'Story 1', 'story'],
      [311, '', 'newws'], [328.5, '', 'newdb'], [346.5, '', 'newst'], [364.5, ' ']],
    active: 'Sheet 2', status: ['marks', 25, '1 row by 1 column', 83.5], task: taskB }
];

document.getElementById('desktop').innerHTML = windows.map(w => `<section class="win ${w.cls}">
  <div class="titlebar">${track([[0, w.title], [671, '<svg class="s8" viewBox="0 0 8 8"><path d="M1 3.500h6" stroke="#333" stroke-width="1.100"/></svg>'],
    [696, '<svg class="s7" viewBox="0 0 8 8"><path d="M1 2.500h4.500V7H1zM2.500 2.500V1H7v4.500H5.500" stroke="#333" fill="none"/></svg>']])}</div>
  <div class="menubar">${menu}</div>
  <div class="toolbar">${toolbar(w)}</div>
  <div class="body">${pane(w)}${cards(w)}
    ${w.card ? `<div class="title-card"><span class="t">Title</span><p>${w.card}</p></div>` : ''}
    <div class="main">${shelf('cols', 'Columns', w.cols)}${shelf('rows', 'Rows', w.rows)}
      <div class="view"><div class="canvas">${w.chart()}</div>${w.legend ? legend() : ''}</div></div>
  </div>
  <div class="tabs">${tabs(w)}</div>
  <div class="status">${status(w)}</div>
  <div class="task">${w.task()}</div>
</section>`).join('');
```
